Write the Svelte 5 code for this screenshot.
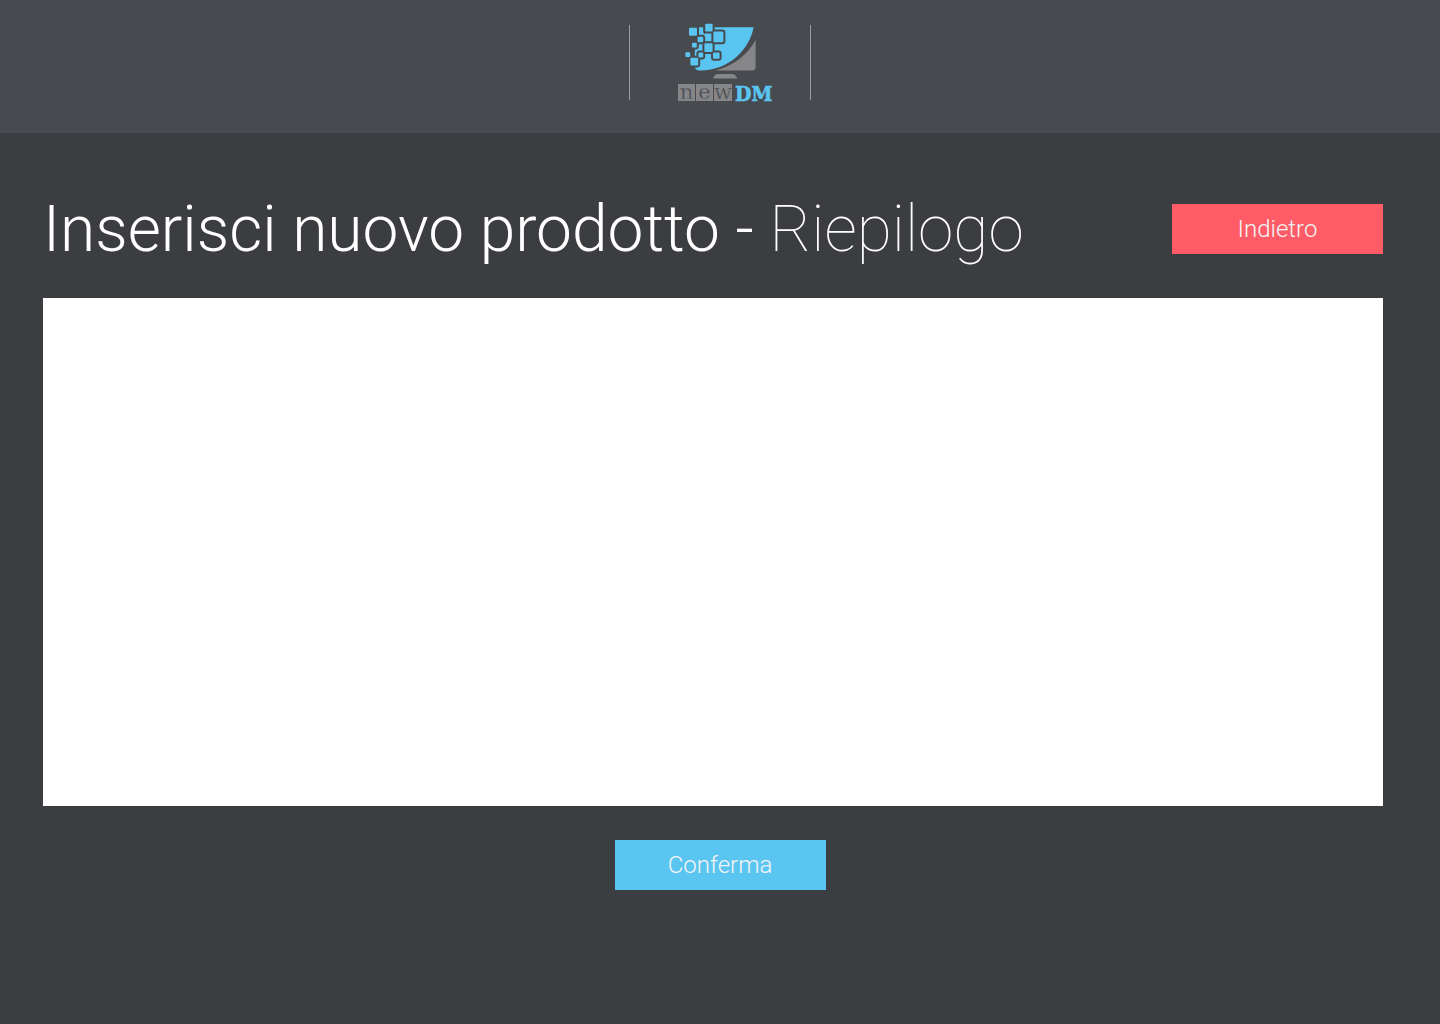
<script>
  const tiles = [
    [689, 27.7, 8, 8],
    [705.2, 23.7, 7.4, 7.8],
    [697.6, 36.8, 5.6, 5.4],
    [713.4, 31.6, 10, 10.6],
    [692, 42.8, 4.8, 4.8],
    [704.4, 43.2, 8.2, 8.8],
    [713, 52.6, 6.6, 6.2],
    [698.4, 52.4, 4.8, 5],
    [685.4, 52.2, 4.8, 4.8],
    [690.4, 57.8, 7.8, 7.6]
  ];
  const letters = [
    { char: 'n', x: 678, width: 17 },
    { char: 'e', x: 696, width: 17 },
    { char: 'w', x: 714, width: 18 }
  ];
</script>

<div class="page">
  <header class="topbar">
    <div class="brand">
      <svg class="logo" viewBox="677 17 96 91" role="img" aria-label="newDM">
        <path class="blue" d="M699 27.3H753.6C750 48 730 70.6 700 70.6C696.5 70.6 695 69 694.3 66L695 49L699 45Z" />
        <path class="gap" d="M703.6 26H705V34H703.6Z" />
        {#each tiles as [x, y, width, height]}
          <rect class="outline" {x} {y} {width} {height} rx="1" />
        {/each}
        {#each tiles as [x, y, width, height]}
          <rect class="blue" {x} {y} {width} {height} rx="1" />
        {/each}
        <path class="grey" d="M755.6 40V67Q755.6 70.6 752 70.6H715.5C735 65 748 54 755.6 40Z" />
        <path class="grey" d="M717.5 74H732.5Q735.5 74 737.3 78.6H713Q714.5 74 717.5 74Z" />
        {#each letters as letter}
          <rect class="grey" x={letter.x} y="84" width={letter.width} height="17" />
          <text class="new" x={letter.x + letter.width / 2} y="99" text-anchor="middle">{letter.char}</text>
        {/each}
        <text class="dm" x="735" y="101">DM</text>
      </svg>
    </div>
  </header>

  <main>
    <div class="heading">
      <h1>Inserisci nuovo prodotto - <span>Riepilogo</span></h1>
      <button class="back" type="button">Indietro</button>
    </div>
    <section class="summary" aria-label="Riepilogo"></section>
    <div class="actions">
      <button class="confirm" type="button">Conferma</button>
    </div>
  </main>
</div>

<style>
  :global(body) {
    background: #3c3d40;
  }
  .page {
    min-height: 100vh;
    background: #3c3d40;
    font-family: Roboto, "Liberation Sans", sans-serif;
    color: #fff;
  }
  .topbar {
    display: flex;
    justify-content: center;
    padding: 25px 0 33px;
    background: #474a4e;
  }
  .brand {
    box-sizing: border-box;
    display: flex;
    align-items: center;
    justify-content: flex-end;
    width: 182px;
    height: 75px;
    padding-right: 37px;
    border: solid #9a9b9d;
    border-width: 0 1px;
  }
  .logo {
    flex: none;
    width: 96px;
    height: 91px;
    overflow: visible;
  }
  .blue {
    fill: #5bc5f2;
  }
  .grey {
    fill: #868688;
  }
  .gap {
    fill: #474a4e;
  }
  .outline {
    fill: none;
    stroke: #474a4e;
    stroke-width: 4px;
  }
  .new {
    font: 21px "DejaVu Serif", serif;
    fill: #474a4e;
    stroke: #868688;
    stroke-width: 0.4px;
  }
  .dm {
    font: bold 21px "DejaVu Serif Condensed", "DejaVu Serif", serif;
    fill: #5bc5f2;
    stroke: #5bc5f2;
    stroke-width: 0.6px;
  }
  .heading {
    display: flex;
    align-items: center;
    justify-content: space-between;
    padding: 57px 57px 30px 43px;
  }
  h1 {
    margin: 0;
    padding-top: 2px;
    font-size: 64px;
    line-height: 76px;
    font-weight: 300;
  }
  h1 span {
    font-weight: 100;
  }
  button {
    width: 211px;
    height: 50px;
    padding: 0;
    border: 0;
    font: 300 24px/28px Roboto, "Liberation Sans", sans-serif;
    color: #f4f4f4;
    cursor: pointer;
  }
  .back {
    background: #ff5c67;
  }
  .confirm {
    background: #5bc5f2;
  }
  .summary {
    min-height: 508px;
    margin: 0 57px 0 43px;
    background: #fff;
  }
  .actions {
    display: flex;
    justify-content: center;
    padding: 34px 0;
  }
</style>
